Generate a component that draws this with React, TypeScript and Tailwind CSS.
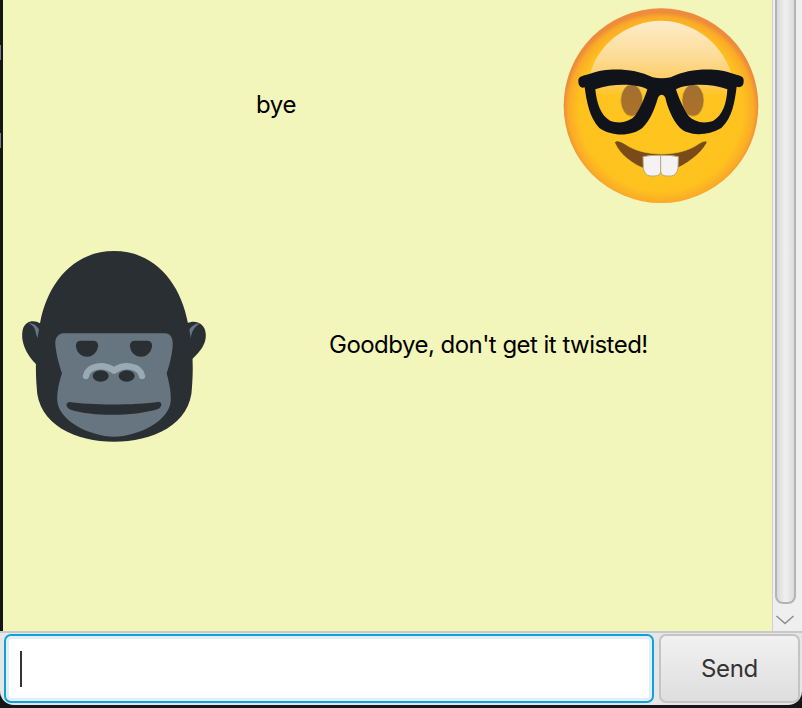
const sans = "font-['Inter','Liberation_Sans',sans-serif]";

function Nerd() {
  return (
    <svg width="220" height="215" viewBox="0 0 660 645" className="block shrink-0">
      <defs>
        <radialGradient id="face" cx="50%" cy="52%" r="50%">
          <stop offset="0%" stopColor="#ffc61e" />
          <stop offset="84%" stopColor="#fec21f" />
          <stop offset="95%" stopColor="#fbab26" />
          <stop offset="100%" stopColor="#ec8c3c" />
        </radialGradient>
        <linearGradient id="shine" x1="0" y1="0" x2="0" y2="1">
          <stop offset="0%" stopColor="#fdeccb" />
          <stop offset="50%" stopColor="#fddb95" />
          <stop offset="85%" stopColor="#fdc95a" />
          <stop offset="100%" stopColor="#fec524" />
        </linearGradient>
        <linearGradient id="eye" x1="0" y1="0" x2="0" y2="1">
          <stop offset="0%" stopColor="#9e7036" />
          <stop offset="45%" stopColor="#a8702c" />
          <stop offset="100%" stopColor="#ad722a" />
        </linearGradient>
      </defs>
      <circle cx="333" cy="317" r="292" fill="url(#face)" />
      <path d="M115 250 C130 130 240 62 333 62 C425 62 530 130 552 250 C555 265 540 285 500 285 L170 285 C125 285 112 265 115 250 Z" fill="url(#shine)" />
      <ellipse cx="245" cy="301" rx="33" ry="48" fill="url(#eye)" stroke="#e4c82a" strokeWidth="2" />
      <ellipse cx="429" cy="301" rx="33" ry="48" fill="url(#eye)" stroke="#e4c82a" strokeWidth="2" />
      <path
        fillRule="evenodd"
        fill="#10131a"
        d="M85 244 C84 226 105 228 125 220 C165 204 250 202 308 232 C325 236 345 236 362 232 C420 202 505 204 545 220 C565 228 583 226 581 244 C581 260 570 264 560 260 C554 305 548 352 514 384 C470 410 412 408 388 382 C366 356 352 320 347 296 C343 280 327 280 323 296 C316 320 302 360 277 384 C245 410 183 410 148 384 C118 352 110 305 104 262 C95 266 85 260 85 244 Z M136 268 C140 310 152 346 180 362 C205 372 238 368 256 346 C274 318 286 288 292 268 C262 252 192 248 136 268 Z M378 268 C384 288 396 318 414 346 C432 368 465 372 490 362 C518 346 530 310 532 268 C478 248 408 252 378 268 Z"
      />
      <path d="M194 428 C198 418 212 424 225 432 C280 472 390 472 445 432 C458 424 474 418 470 430 C450 465 405 495 375 508 L290 508 C250 495 210 465 194 428 Z" fill="#7a4a18" stroke="#f0d520" strokeWidth="2" />
      <path d="M279 470 Q300 465 332 466 L332 512 Q332 528 314 528 L300 528 Q284 526 280 505 Z" fill="#f5f2f3" stroke="#b9a77a" strokeWidth="3" />
      <path d="M385 470 Q364 465 332 466 L332 512 Q332 528 350 528 L364 528 Q380 526 384 505 Z" fill="#f5f2f3" stroke="#b9a77a" strokeWidth="3" />
    </svg>
  );
}

function Gorilla() {
  return (
    <svg width="210" height="210" viewBox="0 0 630 630" className="block shrink-0">
      <path d="M90 250 C75 240 45 240 38 270 C30 310 55 350 78 372 L530 372 C555 350 592 320 587 280 C585 250 555 238 532 250 Z" fill="#292f33" />
      <path d="M55 250 C74 248 90 262 98 298 C88 302 80 295 76 272 C72 258 64 254 55 250 Z" fill="#66757f" />
      <path d="M572 250 C553 248 535 265 528 290 C530 300 538 302 542 295 C546 270 556 258 572 250 Z" fill="#66757f" />
      <path d="M312 33 C190 33 112 130 90 250 C76 320 76 390 80 440 C82 555 200 605 312 605 C425 605 544 555 546 440 C550 390 550 320 534 250 C512 130 435 33 312 33 Z" fill="#292f33" />
      <path d="M160 280 L465 280 C482 280 490 295 488 320 C485 350 478 375 470 400 C478 430 484 460 482 485 C475 545 385 588 312 590 C240 588 150 545 142 485 C140 460 146 430 156 400 C148 375 140 350 136 315 C134 295 145 280 160 280 Z" fill="#66757f" />
      <path d="M212 302 L250 302 C262 302 265 312 264 320 C260 340 246 350 231 350 C216 350 201 340 198 320 C197 312 200 302 212 302 Z" fill="#292f33" />
      <path d="M374 302 L412 302 C424 302 427 312 426 320 C422 340 408 350 393 350 C378 350 363 340 360 320 C359 312 362 302 374 302 Z" fill="#292f33" />
      <path d="M228 408 C234 376 282 370 312 392 C342 370 390 376 396 408" fill="none" stroke="#99aab5" strokeWidth="19" strokeLinecap="round" strokeLinejoin="round" />
      <ellipse cx="272" cy="408" rx="24" ry="17" fill="#292f33" />
      <ellipse cx="350" cy="408" rx="24" ry="17" fill="#292f33" />
      <path d="M178 486 C240 496 380 496 446 485 C458 487 456 500 444 507 C370 530 250 530 182 509 C166 502 166 489 178 486 Z" fill="#292f33" />
    </svg>
  );
}

export default function App() {
  return (
    <div className={`flex h-[708px] w-[802px] flex-col overflow-hidden bg-[#161616] ${sans}`}>
      <div className="flex h-[631px] shrink-0">
        <div className="flex w-[3px] shrink-0 flex-col">
          <div className="h-[45px]" />
          <div className="h-[15px] w-[1px] bg-[#6f7c8c]" />
          <div className="h-[73px]" />
          <div className="h-[15px] w-[1px] bg-[#6f7c8c]" />
        </div>
        <div className="flex w-[769px] flex-col bg-[#f3f6ba]">
          <div className="flex h-[240px] shrink-0 items-start">
            <span className="ml-[253px] mt-[90px] text-[24px] leading-[29px] tracking-[-0.4px] text-black">bye</span>
            <div className="ml-auto mr-[2px]"><Nerd /></div>
          </div>
          <div className="flex h-[210px] shrink-0 items-start">
            <div className="ml-[7px]"><Gorilla /></div>
            <span className="ml-[109px] mt-[90px] whitespace-nowrap text-[24px] leading-[29px] tracking-[-0.53px] text-black">Goodbye, don't get it twisted!</span>
          </div>
        </div>
        <div className="flex w-[30px] flex-col bg-[#efefef] border-l border-[#d0d0d0]">
          <div className="ml-[2px] w-[21px] flex-1 rounded-b-[8px] border-x-2 border-b-2 border-[#b4b4b4] bg-gradient-to-r from-[#dadada] via-[#f0f0f0] to-[#dcdcdc]" />
          <div className="flex h-[27px] w-full shrink-0 items-start justify-start pl-[2px] pt-[11px]">
            <svg width="20" height="12" viewBox="0 0 20 12" fill="none" stroke="#8f8f8f" strokeWidth="1.6">
              <path d="M1.5 1 L10 8.5 L18.5 1" />
            </svg>
          </div>
        </div>
      </div>
      <div className="flex h-[74px] shrink-0 gap-[5px] rounded-b-[14px] border-t-2 border-[#c9c9c9] bg-[#e6e6e6] pb-[2px] pl-[4px] pr-[2px] pt-[1px]">
        <div className="flex w-[650px] items-center rounded-[7px] border-[2px] border-[#0aa3dc] bg-white pl-[14px] shadow-[inset_0_0_0_3px_#e2eef8]">
          <div className="h-[36px] w-[2px] bg-[#333]" />
        </div>
        <button className="flex-1 rounded-[7px] border-2 border-[#c4c4c4] bg-gradient-to-b from-[#f1f1f1] to-[#dedede] text-[24px] tracking-[-0.3px] text-[#333]">Send</button>
      </div>
    </div>
  );
}
